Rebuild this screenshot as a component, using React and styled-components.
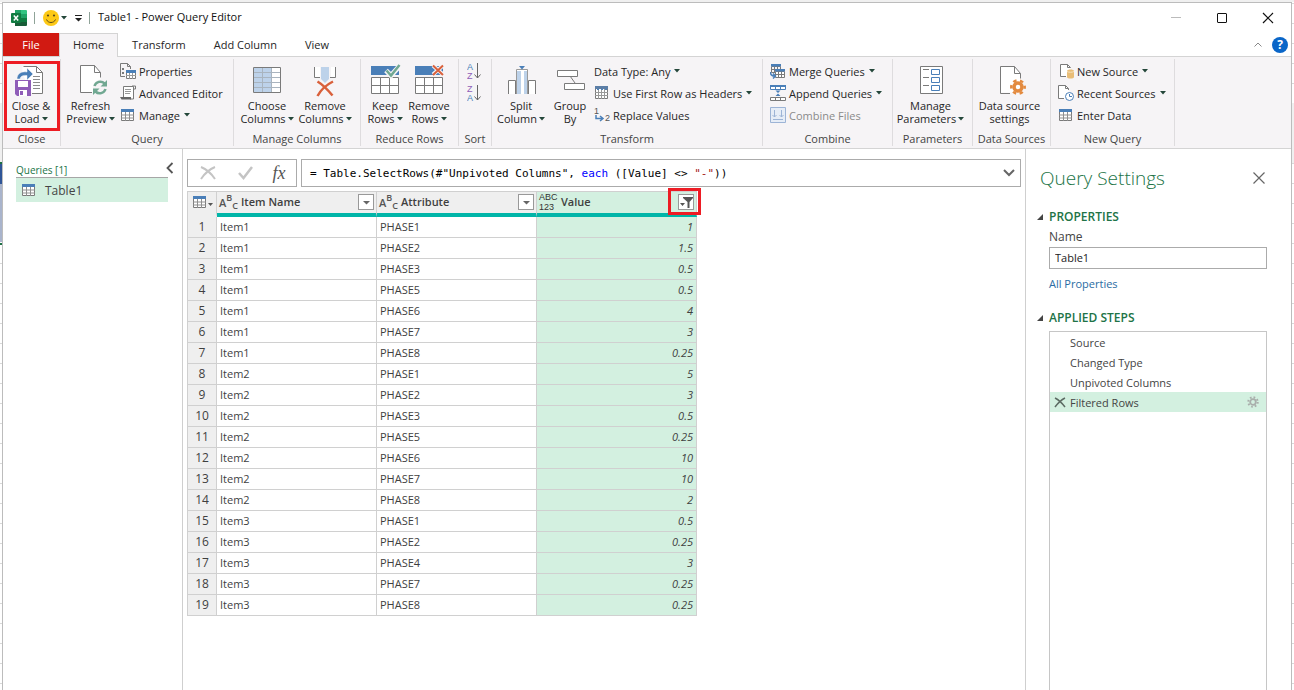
import React, { useState } from 'react';
import styled, { createGlobalStyle, css } from 'styled-components';

const GREY = '#7a7a7a';
const BLUE = '#4a7fb8';
const LIGHT_BLUE = '#bdd2ea';
const RED = '#d9603b';
const GREEN = '#71a892';

const COLUMNS = [
  { name: 'Item Name', type: 'text' },
  { name: 'Attribute', type: 'text' },
  { name: 'Value', type: 'any', selected: true, filtered: true },
];

const ROWS = [
  ['Item1', 'PHASE1', '1'],
  ['Item1', 'PHASE2', '1.5'],
  ['Item1', 'PHASE3', '0.5'],
  ['Item1', 'PHASE5', '0.5'],
  ['Item1', 'PHASE6', '4'],
  ['Item1', 'PHASE7', '3'],
  ['Item1', 'PHASE8', '0.25'],
  ['Item2', 'PHASE1', '5'],
  ['Item2', 'PHASE2', '3'],
  ['Item2', 'PHASE3', '0.5'],
  ['Item2', 'PHASE5', '0.25'],
  ['Item2', 'PHASE6', '10'],
  ['Item2', 'PHASE7', '10'],
  ['Item2', 'PHASE8', '2'],
  ['Item3', 'PHASE1', '0.5'],
  ['Item3', 'PHASE2', '0.25'],
  ['Item3', 'PHASE4', '3'],
  ['Item3', 'PHASE7', '0.25'],
  ['Item3', 'PHASE8', '0.25'],
];

const STEPS = ['Source', 'Changed Type', 'Unpivoted Columns', 'Filtered Rows'];

/* ---------- icons ---------- */

const Big = ({ children }) => (
  <svg width="32" height="35" viewBox="0 0 32 35" fill="none" aria-hidden="true">
    {children}
  </svg>
);

const Small = ({ children }) => (
  <svg width="16" height="16" viewBox="0 0 16 16" fill="none" aria-hidden="true">
    {children}
  </svg>
);

const Caret = () => (
  <svg width="6" height="4" viewBox="0 0 6 4" aria-hidden="true">
    <path d="M0 0h6L3 3.5z" fill="#24473a" />
  </svg>
);

const ExcelIcon = () => (
  <svg width="16" height="16" viewBox="0 0 16 16" aria-hidden="true">
    <path d="M4 0h6v8H4z" fill="#21a366" />
    <path d="M10 0h5a1 1 0 0 1 1 1v3h-6z" fill="#33c481" />
    <path d="M10 4h6v4h-6z" fill="#21a366" />
    <path d="M4 4h6v4H4z" fill="#107c41" />
    <path d="M4 8h6v4H4z" fill="#185c37" />
    <path d="M10 8h6v4h-6z" fill="#107c41" />
    <path d="M4 12h12v3a1 1 0 0 1-1 1H4z" fill="#185c37" />
    <rect y="3" width="10" height="10" rx="1" fill="#107c41" />
    <path d="M2.8 5.5l4.4 5M7.2 5.5l-4.4 5" stroke="#fff" strokeWidth="1.5" />
  </svg>
);

const SmileIcon = () => (
  <svg width="16" height="16" viewBox="0 0 16 16" aria-hidden="true">
    <circle cx="8" cy="8" r="8" fill="#fdc916" />
    <circle cx="5" cy="5.5" r="1.1" fill="#5a4a1c" />
    <circle cx="11" cy="5.5" r="1.1" fill="#5a4a1c" />
    <path d="M3.5 9.5c1.6 4 7.4 4 9 0" fill="none" stroke="#5a4a1c" />
  </svg>
);

const CloseLoadIcon = () => (
  <Big>
    <path d="M7.5 10V2.5h14l6 6v21H17" fill="#fff" />
    <path d="M8.5 2.5h13l6 6v21H17M21.5 2.5v6h6" stroke={GREY} />
    <path d="M18 12.5h7M18 15.5h7M18 18.5h7M18 21.5h7M18 24.5h7" stroke="#8c8c8c" />
    <path
      d="M2 15C2 10 6 7 12 8V4l6 6-6 6v-4.500c-4-.500-6.500.500-7 3.500z"
      fill={BLUE}
      stroke="#f6f4f6"
      strokeWidth=".5"
    />
    <path d="M0 16h16v16H2l-2-2z" fill="#8f5db8" />
    <path d="M3 17h10v6H3z" fill="#fff" />
    <path d="M4 26h8v6H4z" fill="#fff" />
    <path d="M5 27h3v4H5z" fill="#8f5db8" />
  </Big>
);

const RefreshIcon = () => (
  <Big>
    <path d="M5.500 1.500h14l6 7v7c-5 0-9 5-7 13h-13z" fill="#fff" />
    <path d="M17 28.500H5.500v-27h14l6 7v5M19.500 1.500v7h6" stroke={GREY} />
    <path d="M19.500 22a6 6 0 0 1 10-2.500M30.500 25a6 6 0 0 1-10 2.500" stroke={GREEN} strokeWidth="2.500" />
    <path d="M32 16v6.500h-6.500zM18 31v-6.500h6.500z" fill={GREEN} />
  </Big>
);

const ChooseColumnsIcon = () => (
  <Big>
    <path d="M2 3h28v26H2z" fill="#fff" />
    <path d="M3 4h17v24H3z" fill={LIGHT_BLUE} />
    <path d="M2 8.500h28M2 13.500h28M2 18.500h28M2 23.500h28M11.500 3v26M20.500 3v26" stroke="#a9b4bf" />
    <path d="M2.500 3.500h27v25h-27z" stroke={GREY} />
  </Big>
);

const RemoveColumnsIcon = () => (
  <Big>
    <path d="M5 3h6v10H5zM22 3h5v10h-5z" fill="#fff" />
    <path d="M5.500 3v10.500H11M26.500 3v10.500H21" stroke={GREY} />
    <path d="M12 3h8v12l-4 4-4-4z" fill={LIGHT_BLUE} />
    <path d="M8.500 17.500c5 3 10 8 15 14" stroke={RED} strokeWidth="2.500" />
    <path d="M24 17.500c-6 3-12 8-15.500 14.500" stroke={RED} strokeWidth="2.500" />
  </Big>
);

const RowsGrid = () => (
  <>
    <path d="M2 2h28v9H2z" fill={BLUE} />
    <path d="M2.500 13.500h27v16h-27z" fill="#fff" stroke={GREY} />
    <path d="M2 21.500h28M11.500 13v17M20.500 13v17" stroke={GREY} />
  </>
);

const KeepRowsIcon = () => (
  <Big>
    <RowsGrid />
    <path d="M17 6.500l5 5 9-10" stroke="#f6f4f6" strokeWidth="5" />
    <path d="M17.500 6.500l4.500 5 8.500-10.500" stroke={GREEN} strokeWidth="2.500" />
  </Big>
);

const RemoveRowsIcon = () => (
  <Big>
    <RowsGrid />
    <path d="M20 1.500l10 9M30 1.500l-10 9" stroke="#f6f4f6" strokeWidth="4" />
    <path d="M20 1.500l10 9.500M30 1.500l-10 9.500" stroke={RED} strokeWidth="2" />
  </Big>
);

const SortIcon = ({ first, second }) => (
  <svg width="16" height="20" viewBox="0 0 16 20" fill="none" aria-hidden="true">
    <SortLetter x="0" y="9" fill={first === 'A' ? BLUE : '#8f5db8'}>{first}</SortLetter>
    <SortLetter x="0" y="18" fill={second === 'A' ? BLUE : '#8f5db8'}>{second}</SortLetter>
    <path d="M10.500 2v15M7.500 13.500l3 3.500 3-3.500" stroke="#666" />
  </svg>
);

const SplitIcon = () => (
  <Big>
    <path d="M3 16h8v14H3zM23 16h8v14h-8z" fill="#fff" />
    <path d="M3.500 30V16.500h7V30M23.500 30V16.500h7V30" stroke={GREY} />
    <path d="M12 6h11v24H12z" fill="#fff" />
    <path d="M12 7h4v23h-4zM19 7h3v23h-3z" fill={LIGHT_BLUE} />
    <path d="M11.500 30V5.500h11V30" stroke="#9a9a9a" />
    <path d="M14 2h6l-3 3.500z" fill={BLUE} />
  </Big>
);

const GroupByIcon = () => (
  <Big>
    <path d="M16 12l5 7" stroke={GREY} />
    <path d="M3.500 6.500h20v6h-20zM10.500 19.500h20v6h-20z" fill="#fff" stroke={GREY} />
  </Big>
);

const ParametersIcon = () => (
  <Big>
    <path d="M5.500 2.500h22v27h-22z" fill="#fff" stroke={GREY} />
    <path d="M8 5.500h6M8 13.500h6M8 21.500h6" stroke={GREY} />
    <path d="M16.500 5.500h8v5h-8zM16.500 13.500h8v5h-8zM16.500 21.500h8v5h-8z" stroke={BLUE} />
  </Big>
);

const DataSourceIcon = () => (
  <Big>
    <path d="M6.500 2.500h14l6 7v14l-8 5h-12z" fill="#fff" />
    <path d="M16 29.500H6.500v-27h14l6 7v5M20.500 2.500v7h6" stroke={GREY} />
    <circle cx="24" cy="23" r="4" stroke="#e38a3f" strokeWidth="3.500" />
    <circle
      cx="24"
      cy="23"
      r="6.700"
      stroke="#e38a3f"
      strokeWidth="2.500"
      strokeDasharray="3.500 3.520"
      strokeDashoffset="1.700"
    />
  </Big>
);

const TableIcon = () => (
  <Small>
    <path d="M1.500 2.500h12v11h-12z" fill="#fff" stroke={GREY} />
    <path d="M1 8h13M1 11h13M5.500 5v9M9.500 5v9" stroke="#8f8f8f" />
    <path d="M1 2h13v3H1z" fill={BLUE} />
  </Small>
);

const PropertiesIcon = () => (
  <Small>
    <path d="M5 13.500H.500V.500h7l3 3V6" stroke={GREY} />
    <path d="M7.500.500v3h3" stroke={GREY} />
    <path d="M2 5h2v2H2zM2 9h2v2H2z" fill={GREY} />
    <path d="M6.500 8.500h9v7h-9z" fill="#fff" stroke={GREY} />
    <path d="M6 12.500h10M9.500 9v7M12.500 9v7" stroke="#999" />
    <path d="M6 7h10v3H6z" fill={BLUE} />
  </Small>
);

const AdvancedIcon = () => (
  <Small>
    <path d="M3.500 12V1.500h10V14H10" fill="#fff" stroke={GREY} />
    <path d="M12 1h3.500v3H14" stroke={GREY} />
    <path d="M5 4.500h6M5 6.500h6M5 8.500h5" stroke="#999" />
    <path d="M0 12h11v2.500H1.500z" fill="#666" />
  </Small>
);

const HeadersIcon = () => (
  <Small>
    <path d="M1.500 2.500h12v11h-12z" fill="#fff" stroke={GREY} />
    <path d="M1 7.500h13M1 10.500h13M4.500 2v12M7.500 2v12M10.500 2v12" stroke="#999" />
    <path d="M1 1h13v3H1z" fill="#5c7ea6" />
    <path d="M3 4h2v1H3zM7 4h2v1H7zM11 4h2v1h-2z" fill={BLUE} />
  </Small>
);

const ReplaceIcon = () => (
  <Small>
    <DigitLetter x="0" y="7">1</DigitLetter>
    <DigitLetter x="11" y="14">2</DigitLetter>
    <path d="M2 8v3.500h6M6 9l3 2.500L6 14" stroke={BLUE} strokeWidth="1.500" />
  </Small>
);

const MergeIcon = () => (
  <Small>
    <path d="M1.500 3.500h9v6h-9zM1 6.500h10M4.500 3v7M7.500 3v7" stroke={GREY} />
    <path d="M1 1h10v2.500H1z" fill={BLUE} />
    <path d="M5.500 8.500h9v6h-9z" fill="#fff" stroke={GREY} />
    <path d="M5 11.500h10M8.500 8v7M11.500 8v7" stroke={GREY} />
    <path d="M5 6h10v2.500H5z" fill={BLUE} />
    <path d="M.500 9c0 3 1 4 4 4M3 10.500l2.500 2.500L3 15.500" stroke={BLUE} strokeWidth="1.500" />
  </Small>
);

const AppendIcon = () => (
  <Small>
    <path d="M.500 1.500h15v3H.500z" fill="#fff" stroke={BLUE} />
    <path d="M0 0h16v2H0zM5 2h1v2H5zM10 2h1v2h-1z" fill={BLUE} />
    <path d="M.500 12.500h15v3H.500zM5.500 12v4M10.500 12v4" fill="#fff" stroke={GREY} />
    <path d="M5.500 5.500h5L8 8zM5.500 11h5L8 8.500z" fill={BLUE} />
  </Small>
);

const CombineFilesIcon = () => (
  <Small>
    <path d="M.500.500h15v15H.500z" fill="#e6edf7" stroke="#9db4d6" />
    <path d="M4.500 3v7M2.500 8l2 2 2-2M11.500 3v7M9.500 8l2 2 2-2M3 12.500h10" stroke="#9db4d6" />
  </Small>
);

const NewSourceIcon = () => (
  <Small>
    <path d="M2.500 1.500h7l3 3V14h-10z" fill="#fff" />
    <path d="M8 13.500H2.500v-12h7l3 3M9.500 1.500v3h3" stroke={GREY} />
    <path d="M9 8c0-2 7-2 7 0v6c0 2-7 2-7 0z" fill="#e9bd77" />
    <path d="M9 8.500c1.500 1 5.500 1 7 0" stroke="#f6e3c2" />
  </Small>
);

const RecentIcon = () => (
  <Small>
    <path d="M.500.500h7l3 3v10H.500z" fill="#fff" />
    <path d="M6 13.500H.500V.500h7l3 3V5M7.500.500v3h3" stroke={GREY} />
    <circle cx="11.500" cy="11.500" r="4" fill="#fff" stroke={BLUE} />
    <path d="M11.500 9v2.500H14" stroke={BLUE} />
  </Small>
);

/* ---------- page ---------- */

const BigButton = ({ icon, lines, caret, width }) => (
  <BigButtonBase $width={width}>
    {icon}
    <span>{lines[0]}</span>
    <LabelLine $gap={2}>
      {lines[1]}
      {caret && <Caret />}
    </LabelLine>
  </BigButtonBase>
);

const SmallButton = ({ icon, label, caret, disabled }) => (
  <SmallButtonBase disabled={disabled}>
    {icon}
    <LabelLine $gap={4}>
      {label}
      {caret && <Caret />}
    </LabelLine>
  </SmallButtonBase>
);

const Group = ({ name, width, indent = 0, highlighted, children }) => (
  <GroupBase $width={width}>
    <GroupTools $indent={indent}>{children}</GroupTools>
    <GroupName>{name}</GroupName>
    {highlighted && <RibbonHighlight />}
  </GroupBase>
);

const Ribbon = () => (
  <RibbonBar>
    <Group name="Close" width={58} highlighted>
      <BigButton width={56} icon={<CloseLoadIcon />} lines={['Close &', 'Load']} caret />
    </Group>
    <Group name="Query" width={173}>
      <BigButton width={59} icon={<RefreshIcon />} lines={['Refresh', 'Preview']} caret />
      <SmallColumn>
        <SmallButton icon={<PropertiesIcon />} label="Properties" />
        <SmallButton icon={<AdvancedIcon />} label="Advanced Editor" />
        <SmallButton icon={<TableIcon />} label="Manage" caret />
      </SmallColumn>
    </Group>
    <Group name="Manage Columns" width={127} indent={4}>
      <BigButton width={58} icon={<ChooseColumnsIcon />} lines={['Choose', 'Columns']} caret />
      <BigButton width={58} icon={<RemoveColumnsIcon />} lines={['Remove', 'Columns']} caret />
    </Group>
    <Group name="Reduce Rows" width={98} indent={2}>
      <BigButton width={44} icon={<KeepRowsIcon />} lines={['Keep', 'Rows']} caret />
      <BigButton width={44} icon={<RemoveRowsIcon />} lines={['Remove', 'Rows']} caret />
    </Group>
    <Group name="Sort" width={33} indent={8}>
      <SmallColumn>
        <SmallButtonBase aria-label="Sort ascending">
          <SortIcon first="A" second="Z" />
        </SmallButtonBase>
        <SmallButtonBase aria-label="Sort descending">
          <SortIcon first="Z" second="A" />
        </SmallButtonBase>
      </SmallColumn>
    </Group>
    <Group name="Transform" width={271} indent={4}>
      <BigButton width={50} icon={<SplitIcon />} lines={['Split', 'Column']} caret />
      <BigButton width={48} icon={<GroupByIcon />} lines={['Group', 'By']} />
      <SmallColumn>
        <SmallButton label="Data Type: Any" caret />
        <SmallButton icon={<HeadersIcon />} label="Use First Row as Headers" caret />
        <SmallButton icon={<ReplaceIcon />} label="Replace Values" />
      </SmallColumn>
    </Group>
    <Group name="Combine" width={130} indent={7}>
      <SmallColumn>
        <SmallButton icon={<MergeIcon />} label="Merge Queries" caret />
        <SmallButton icon={<AppendIcon />} label="Append Queries" caret />
        <SmallButton icon={<CombineFilesIcon />} label="Combine Files" disabled />
      </SmallColumn>
    </Group>
    <Group name="Parameters" width={80}>
      <BigButton width={75} icon={<ParametersIcon />} lines={['Manage', 'Parameters']} caret />
    </Group>
    <Group name="Data Sources" width={78}>
      <BigButton width={73} icon={<DataSourceIcon />} lines={['Data source', 'settings']} />
    </Group>
    <Group name="New Query" width={124} indent={7}>
      <SmallColumn>
        <SmallButton icon={<NewSourceIcon />} label="New Source" caret />
        <SmallButton icon={<RecentIcon />} label="Recent Sources" caret />
        <SmallButton icon={<TableIcon />} label="Enter Data" />
      </SmallColumn>
    </Group>
  </RibbonBar>
);

const TypeIcon = ({ type }) =>
  type === 'text' ? (
    <TextType>
      A<sup>B</sup>
      <sub>C</sub>
    </TextType>
  ) : (
    <AnyType>
      <span>ABC</span>
      <span>123</span>
    </AnyType>
  );

const DataGrid = () => (
  <Grid>
    <colgroup>
      <NumberCol />
      {COLUMNS.map((column) => (
        <DataCol key={column.name} />
      ))}
    </colgroup>
    <thead>
      <tr>
        <CornerCell>
          <CornerButton aria-label="Table options">
            <TableIcon />
            <svg width="5" height="8" viewBox="0 0 5 8" aria-hidden="true">
              <path d="M0 5h5L2.500 8z" fill="#555" />
            </svg>
          </CornerButton>
        </CornerCell>
        {COLUMNS.map((column) => (
          <HeaderCell key={column.name} $selected={column.selected}>
            <HeaderContent>
              <TypeIcon type={column.type} />
              <HeaderName>{column.name}</HeaderName>
              <FilterSpot>
                <FilterButton aria-label={`Filter ${column.name}`}>
                  <svg width="13" height="13" viewBox="0 0 13 13" aria-hidden="true">
                    {column.filtered ? (
                      <path d="M3 1h10v1L9.500 6v6h-2V6L3 2zM0 7h5L2.500 10z" fill="#555" />
                    ) : (
                      <path d="M3 5h7L6.500 8.500z" fill="#666" />
                    )}
                  </svg>
                </FilterButton>
                {column.filtered && <FilterHighlight />}
              </FilterSpot>
            </HeaderContent>
          </HeaderCell>
        ))}
      </tr>
    </thead>
    <tbody>
      {ROWS.map(([item, attribute, value], i) => (
        <tr key={`${item}-${attribute}`}>
          <RowNumber>{i + 1}</RowNumber>
          <Cell>{item}</Cell>
          <Cell>{attribute}</Cell>
          <ValueCell>{value}</ValueCell>
        </tr>
      ))}
    </tbody>
  </Grid>
);

const SectionTitle = ({ children }) => (
  <SectionHeading>
    <svg width="6" height="6" viewBox="0 0 6 6" aria-hidden="true">
      <path d="M6 0v6H0z" fill="#444" />
    </svg>
    {children}
  </SectionHeading>
);

const QuerySettings = () => {
  const [name, setName] = useState('Table1');
  const [activeStep, setActiveStep] = useState('Filtered Rows');

  return (
    <SettingsPane>
      <SettingsHeader>
        <SettingsTitle>Query Settings</SettingsTitle>
        <PlainButton aria-label="Close pane">
          <svg width="12" height="12" viewBox="0 0 12 12" aria-hidden="true">
            <path d="M.500.500l11 11M11.500.500l-11 11" stroke="#666" strokeWidth="1.200" />
          </svg>
        </PlainButton>
      </SettingsHeader>
      <SectionTitle>PROPERTIES</SectionTitle>
      <SettingsBody>
        <NameLabel htmlFor="query-name">Name</NameLabel>
        <NameInput id="query-name" value={name} onChange={(e) => setName(e.target.value)} />
        <AllProperties href="#properties">All Properties</AllProperties>
      </SettingsBody>
      <SectionTitle>APPLIED STEPS</SectionTitle>
      <StepList>
        {STEPS.map((step) => {
          const active = step === activeStep;
          return (
            <Step key={step} $active={active}>
              <StepSide>
                {active && (
                  <svg width="12" height="11" viewBox="0 0 12 11" aria-hidden="true">
                    <path
                      d="M1 1c4 2 7 5 10 9M11 1C7 3 4 6 1 10"
                      fill="none"
                      stroke="#5c6b63"
                      strokeWidth="1.500"
                    />
                  </svg>
                )}
              </StepSide>
              <StepButton onClick={() => setActiveStep(step)}>{step}</StepButton>
              {active && (
                <svg width="12" height="12" viewBox="0 0 12 12" fill="none" aria-hidden="true">
                  <circle cx="6" cy="6" r="2.800" stroke="#a9aeab" strokeWidth="1.800" />
                  <circle
                    cx="6"
                    cy="6"
                    r="4.700"
                    stroke="#a9aeab"
                    strokeWidth="2"
                    strokeDasharray="1.700 1.990"
                  />
                </svg>
              )}
            </Step>
          );
        })}
      </StepList>
    </SettingsPane>
  );
};

const App = () => (
  <>
    <GlobalStyle />
    <Desktop>
      <SheetEdge $left />
      <Window>
        <TitleBar>
          <ExcelIcon />
          <TitleDivider />
          <PlainButton aria-label="Send a smile">
            <SmileIcon />
            <Caret />
          </PlainButton>
          <PlainButton aria-label="Customize toolbar">
            <svg width="8" height="7" viewBox="0 0 8 7" aria-hidden="true">
              <path d="M1 0h7v1H1zM1 3h7L4.500 6.500z" fill="#222" />
            </svg>
          </PlainButton>
          <TitleDivider />
          <WindowTitle>Table1 - Power Query Editor</WindowTitle>
          <WindowButton aria-label="Minimize">
            <svg width="12" height="12" viewBox="0 0 12 12" aria-hidden="true">
              <path d="M1 5.500h10" stroke="#bbb" />
            </svg>
          </WindowButton>
          <WindowButton aria-label="Maximize">
            <svg width="12" height="12" viewBox="0 0 12 12" aria-hidden="true">
              <rect x="1.500" y="1.500" width="9" height="9" rx=".500" fill="none" stroke="#111" />
            </svg>
          </WindowButton>
          <WindowButton aria-label="Close">
            <svg width="12" height="12" viewBox="0 0 12 12" aria-hidden="true">
              <path d="M1 1l10 10M11 1L1 11" stroke="#111" strokeWidth="1.200" />
            </svg>
          </WindowButton>
        </TitleBar>
        <TabBar>
          <FileTab>File</FileTab>
          <Tab $active>Home</Tab>
          <Tab>Transform</Tab>
          <Tab>Add Column</Tab>
          <Tab>View</Tab>
          <TabTools>
            <PlainButton aria-label="Collapse ribbon">
              <svg width="8" height="5" viewBox="0 0 8 5" aria-hidden="true">
                <path d="M.500 4.500L4 1l3.500 3.500" fill="none" stroke="#888" />
              </svg>
            </PlainButton>
            <HelpButton aria-label="Help">?</HelpButton>
          </TabTools>
        </TabBar>
        <Ribbon />
        <Workspace>
          <QueriesPane>
            <QueriesHeader>
              <span>Queries [1]</span>
              <CollapseButton aria-label="Collapse queries">
                <svg width="8" height="12" viewBox="0 0 8 12" aria-hidden="true">
                  <path d="M6.500 1L1.500 6l5 5" fill="none" stroke="#555" strokeWidth="1.800" />
                </svg>
              </CollapseButton>
            </QueriesHeader>
            <QueryItem>
              <TableIcon />
              Table1
            </QueryItem>
          </QueriesPane>
          <Editor>
            <FormulaRow>
              <FormulaTools>
                <FormulaButton aria-label="Cancel">
                  <svg width="16" height="14" viewBox="0 0 16 14" aria-hidden="true">
                    <path d="M1 1c5 2 10 6 14 12M15 1C10 3 5 7 1 13" fill="none" stroke="#c4c4c4" strokeWidth="2" />
                  </svg>
                </FormulaButton>
                <FormulaButton aria-label="Commit">
                  <svg width="15" height="14" viewBox="0 0 15 14" aria-hidden="true">
                    <path d="M1 7l4.500 5L14 1" fill="none" stroke="#c4c4c4" strokeWidth="2.500" />
                  </svg>
                </FormulaButton>
                <FxButton aria-label="Insert step">fx</FxButton>
              </FormulaTools>
              <FormulaBox>
                <FormulaText
                  role="textbox"
                  aria-label="Formula"
                  contentEditable
                  suppressContentEditableWarning
                  spellCheck={false}
                >
                  = Table.SelectRows(#"Unpivoted Columns", <Keyword>each</Keyword> ([Value] &lt;&gt;{' '}
                  <StringLiteral>"-"</StringLiteral>))
                </FormulaText>
                <PlainButton aria-label="Expand formula bar">
                  <svg width="12" height="8" viewBox="0 0 12 8" aria-hidden="true">
                    <path d="M1 1l5 5 5-5" fill="none" stroke="#666" strokeWidth="2" />
                  </svg>
                </PlainButton>
              </FormulaBox>
            </FormulaRow>
            <DataGrid />
          </Editor>
          <QuerySettings />
        </Workspace>
      </Window>
      <SheetEdge />
    </Desktop>
  </>
);

export default App;

const GlobalStyle = createGlobalStyle`
  * {
    box-sizing: border-box;
  }

  body {
    margin: 0;
    overflow: hidden;
    font-family: 'Open Sans', 'Noto Sans', sans-serif;
    font-size: 11px;
    color: #262626;
  }

  button {
    padding: 0;
    border: none;
    background: none;
    font: inherit;
    color: inherit;
    cursor: pointer;
  }

  svg {
    display: block;
    flex: none;
  }
`;

const Desktop = styled.div`
  height: 100vh;
  padding-top: 2px;
  display: grid;
  grid-template-columns: 2px minmax(0, 1fr) 2px;
  background: #f0f0f0;
`;

const SheetEdge = styled.div`
  background: ${({ $left }) =>
      $left &&
      `linear-gradient(#1d7044, #1d7044) 0 160px / 100% 2px no-repeat,
       linear-gradient(#2f5597, #2f5597) 0 162px / 100% 20px no-repeat,
       linear-gradient(#a9b4cc, #a9b4cc) 0 182px / 100% 58px no-repeat,
       linear-gradient(#1d7044, #1d7044) 0 241px / 100% 2px no-repeat,`}
    linear-gradient(#f0f0f0, #f0f0f0) 0 101px / 100% 60px no-repeat,
    repeating-linear-gradient(#fff 0 1px, #d9d9d9 1px 2px, #fff 2px 20px);
`;

const Window = styled.div`
  min-width: 0;
  display: flex;
  flex-direction: column;
  border: 1px solid #bcbcbc;
  border-bottom: none;
  background: #fff;
`;

const TitleBar = styled.header`
  height: 30px;
  flex: none;
  display: flex;
  align-items: center;
  gap: 7px;
  padding-left: 8px;
`;

const TitleDivider = styled.div`
  width: 1px;
  height: 12px;
  margin-right: 1px;
  background: #8fa398;
`;

const PlainButton = styled.button`
  display: flex;
  align-items: center;
  justify-content: center;
  gap: 2px;
`;

const WindowTitle = styled.span`
  flex: 1;
  line-height: 14px;
  padding-bottom: 2px;
  color: #111;
`;

const WindowButton = styled(PlainButton)`
  width: 46px;
  height: 30px;
  margin-left: -7px;
`;

const TabBar = styled.nav`
  height: 24px;
  flex: none;
  display: flex;
  border-bottom: 1px solid #d4d4d4;
`;

const Tab = styled.button`
  && {
    height: 24px;
    padding: 0 13px 2px;
    border: 1px solid ${({ $active }) => ($active ? '#d4d4d4' : 'transparent')};
    border-bottom: none;
    background: ${({ $active }) => ($active ? '#f6f4f6' : 'none')};
  }
`;

const FileTab = styled.button`
  && {
    width: 56px;
    height: 23px;
    background: #d11a12;
    color: #fff;
  }
`;

const TabTools = styled.div`
  margin-left: auto;
  padding-right: 3px;
  display: flex;
  align-items: center;
  gap: 10px;
`;

const HelpButton = styled.button`
  && {
    width: 16px;
    height: 16px;
    border-radius: 50%;
    background: #0a66c8;
    color: #fff;
    font-size: 12px;
    font-weight: bold;
    line-height: 16px;
  }
`;

const RibbonBar = styled.div`
  height: 92px;
  flex: none;
  display: flex;
  padding: 2px 0;
  border-bottom: 1px solid #d4d4d4;
  background: #f6f4f6;
`;

const GroupBase = styled.section`
  position: relative;
  width: ${({ $width }) => $width}px;
  flex: none;
  display: flex;
  flex-direction: column;
  border-right: 1px solid #dedcde;
`;

const GroupTools = styled.div`
  height: 72px;
  flex: none;
  display: flex;
  align-items: flex-start;
  padding-left: ${({ $indent }) => $indent}px;
`;

const GroupName = styled.div`
  line-height: 16px;
  text-align: center;
  white-space: nowrap;
  color: #444;
`;

const RibbonHighlight = styled.div`
  position: absolute;
  top: 2px;
  left: 1px;
  width: 56px;
  height: 70px;
  border: 3px solid #ed1c24;
  pointer-events: none;
`;

const BigButtonBase = styled.button`
  && {
    width: ${({ $width }) => $width}px;
    padding-top: 5px;
    display: flex;
    flex-direction: column;
    align-items: center;
    line-height: 13px;
    white-space: nowrap;
  }
`;

const LabelLine = styled.span`
  display: flex;
  align-items: center;
  gap: ${({ $gap }) => $gap}px;
  white-space: nowrap;
`;

const SmallColumn = styled.div`
  padding-top: 1px;
  display: flex;
  flex-direction: column;
  align-items: flex-start;
`;

const SmallButtonBase = styled.button`
  height: 22px;
  display: flex;
  align-items: center;
  gap: 3px;

  &&:disabled {
    color: #8a8a8a;
  }
`;

const SortLetter = styled.text`
  font-family: 'Liberation Sans', sans-serif;
  font-size: 9px;
`;

const DigitLetter = styled.text`
  font-family: 'Liberation Sans', sans-serif;
  font-size: 9px;
  fill: #555;
`;

const Workspace = styled.main`
  flex: 1;
  min-height: 0;
  display: flex;
`;

const QueriesPane = styled.aside`
  width: 180px;
  flex: none;
  padding: 13px 14px 0 13px;
  border-right: 1px solid #cfcfcf;
`;

const QueriesHeader = styled.div`
  position: relative;
  height: 16px;
  line-height: 16px;
  border-bottom: 1px solid #a6a6a6;
  font-size: 10px;
  color: #217346;
`;

const CollapseButton = styled.button`
  position: absolute;
  top: 0;
  right: -6px;
`;

const QueryItem = styled.button`
  && {
    width: 100%;
    height: 24px;
    display: flex;
    align-items: center;
    gap: 8px;
    padding-left: 5px;
    background: #d3f0e0;
    font-size: 12px;
    color: #444;
  }
`;

const Editor = styled.section`
  flex: 1;
  min-width: 0;
  padding: 10px 4px 0;
`;

const FormulaRow = styled.div`
  display: flex;
  gap: 4px;
  height: 28px;
  margin-bottom: 4px;
`;

const FormulaTools = styled.div`
  width: 110px;
  display: grid;
  grid-template-columns: 40px 34px 34px;
  border: 1px solid #ababab;
`;

const FormulaButton = styled(PlainButton)`
  height: 26px;
`;

const FxButton = styled.button`
  && {
    font-family: 'Liberation Serif', serif;
    font-size: 18px;
    line-height: 22px;
    font-style: italic;
    color: #555;
  }
`;

const FormulaBox = styled.div`
  flex: 1;
  min-width: 0;
  display: flex;
  align-items: center;
  justify-content: space-between;
  padding: 0 5px 0 8px;
  border: 1px solid #ababab;
`;

const FormulaText = styled.div`
  flex: 1;
  outline: none;
  font-family: 'DejaVu Sans Mono', monospace;
  font-size: 11px;
  white-space: nowrap;
  color: #000;
`;

const Keyword = styled.span`
  color: #0000ff;
`;

const StringLiteral = styled.span`
  color: #a31515;
`;

const Grid = styled.table`
  width: 510px;
  table-layout: fixed;
  border-spacing: 0;
  border-left: 1px solid #d0d0d0;
  color: #3f3f3f;
`;

const NumberCol = styled.col`
  width: 29px;
`;

const DataCol = styled.col`
  width: 160px;
`;

const headerCell = css`
  height: 26px;
  padding: 0;
  vertical-align: top;
  border-top: 1px solid #d0d0d0;
  border-right: 1px solid #d0d0d0;
  background: #efefef;
`;

const CornerCell = styled.td`
  ${headerCell}
  border-bottom: 4px solid #efefef;
`;

const CornerButton = styled(PlainButton)`
  && {
    width: 100%;
    height: 20px;
    gap: 0;
  }
`;

const HeaderCell = styled.th`
  ${headerCell}
  border-bottom: 4px solid #01b5a8;
  background: ${({ $selected }) => ($selected ? '#d3f0e0' : '#efefef')};
`;

const HeaderContent = styled.div`
  height: 20px;
  display: flex;
  align-items: center;
  padding: 0 2px;
`;

const HeaderName = styled.span`
  flex: 1;
  padding-bottom: 1px;
  text-align: left;
  font-weight: 600;
`;

const TextType = styled.span`
  width: 22px;
  height: 20px;
  display: flex;
  align-items: center;
  font-size: 11px;
  font-weight: 600;
  color: #555;

  sup,
  sub {
    font-size: 9px;
    line-height: 12px;
  }

  sup {
    align-self: flex-start;
  }

  sub {
    align-self: flex-end;
  }
`;

const AnyType = styled.span`
  width: 22px;
  display: flex;
  flex-direction: column;
  text-align: left;
  font-family: 'Liberation Sans', sans-serif;
  font-size: 9px;
  font-weight: normal;
  line-height: 10px;
  color: #333;
`;

const FilterSpot = styled.span`
  position: relative;
`;

const FilterButton = styled(PlainButton)`
  && {
    width: 16px;
    height: 16px;
    border: 1px solid #999;
    background: #fff;
  }
`;

const FilterHighlight = styled.span`
  position: absolute;
  top: -6px;
  left: -10px;
  width: 33px;
  height: 27px;
  border: 3px solid #ed1c24;
  pointer-events: none;
`;

const Cell = styled.td`
  height: 21px;
  padding: 0 3px;
  border-right: 1px solid #d0d0d0;
  border-bottom: 1px solid #d0d0d0;
  line-height: 16px;
`;

const RowNumber = styled(Cell)`
  padding: 0;
  background: #efefef;
  font-size: 12px;
  text-align: center;
`;

const ValueCell = styled(Cell)`
  background: #d3f0e0;
  font-style: italic;
  text-align: right;
`;

const SettingsPane = styled.aside`
  width: 266px;
  flex: none;
  display: flex;
  flex-direction: column;
  padding: 15px 24px 0 11px;
  border-left: 1px solid #cfcfcf;
`;

const SettingsHeader = styled.div`
  display: flex;
  align-items: center;
  justify-content: space-between;
  height: 28px;
  margin-bottom: 15px;
  padding-left: 3px;
  padding-right: 2px;
`;

const SettingsTitle = styled.h1`
  margin: 0;
  font-size: 19px;
  font-weight: 300;
  color: #217346;
`;

const SectionHeading = styled.h2`
  margin: 0;
  display: flex;
  align-items: center;
  gap: 6px;
  font-size: 12px;
  line-height: 20px;
  font-weight: 600;
  color: #217346;
`;

const SettingsBody = styled.div`
  display: flex;
  flex-direction: column;
  align-items: flex-start;
  padding-left: 12px;
  margin-bottom: 14px;
`;

const NameLabel = styled.label`
  line-height: 20px;
  font-size: 12px;
  color: #444;
`;

const NameInput = styled.input`
  width: 100%;
  height: 22px;
  padding: 0 5px 2px;
  border: 1px solid #ababab;
  outline: none;
  font: inherit;
  color: #222;
`;

const AllProperties = styled.a`
  margin-top: 5px;
  line-height: 20px;
  color: #2b6ca3;
  text-decoration: none;
`;

const StepList = styled.ul`
  flex: 1;
  margin: 3px 0 0 12px;
  padding: 0;
  border: 1px solid #c6c6c6;
  border-bottom: none;
  list-style: none;
`;

const Step = styled.li`
  height: 20px;
  display: flex;
  align-items: center;
  padding: 0 7px 0 4px;
  background: ${({ $active }) => ($active ? '#d3f0e0' : 'none')};
`;

const StepSide = styled.span`
  width: 16px;
`;

const StepButton = styled.button`
  && {
    flex: 1;
    text-align: left;
    color: #444;
  }
`;
